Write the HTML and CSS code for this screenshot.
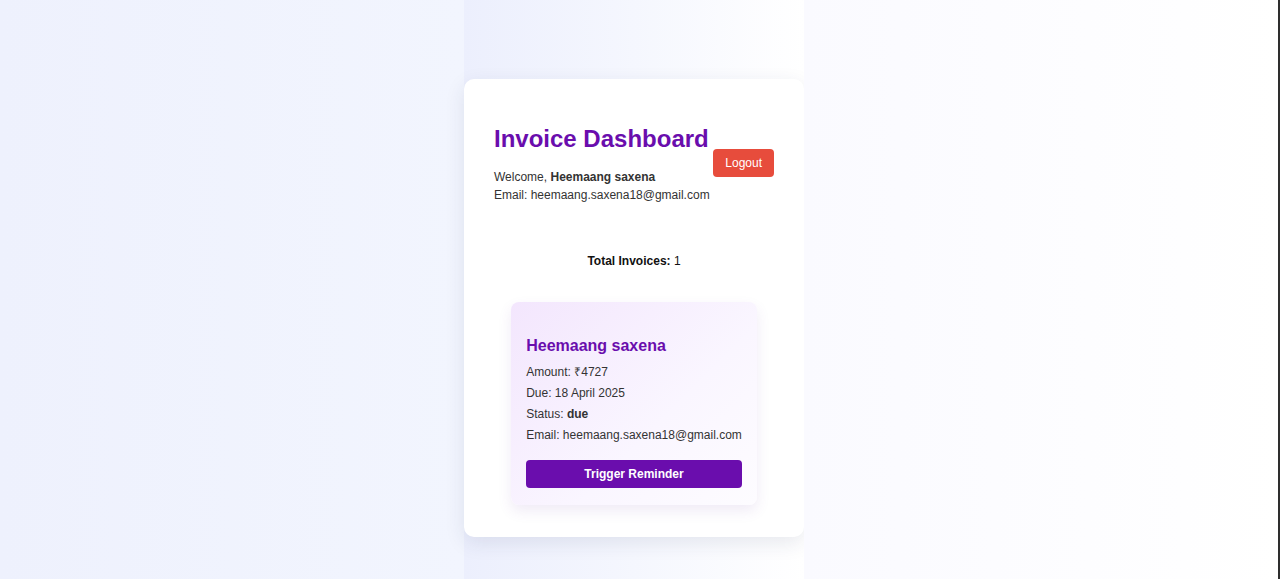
FILE: index.html
```html
<!DOCTYPE html>
<html lang="en">
<head>
<meta charset="utf-8">
<title>Invoice Dashboard</title>
<link rel="stylesheet" href="styles.css">
</head>
<body>
<div class="page">
  <div class="side side-left"></div>
  <div class="column">
    <div class="dashboard">
      <div class="header">
        <div class="user">
          <h1 class="title">Invoice Dashboard</h1>
          <p class="line">Welcome, <strong>Heemaang saxena</strong></p>
          <p class="line last">Email: heemaang.saxena18@gmail.com</p>
        </div>
        <button class="logout">Logout</button>
      </div>
      <p class="total"><strong>Total Invoices:</strong> 1</p>
      <div class="invoices">
        <div class="invoice">
          <h3 class="inv-name">Heemaang saxena</h3>
          <p class="inv-line">Amount: ₹4727</p>
          <p class="inv-line">Due: 18 April 2025</p>
          <p class="inv-line">Status: <strong>due</strong></p>
          <p class="inv-line">Email: heemaang.saxena18@gmail.com</p>
          <button class="remind">Trigger Reminder</button>
        </div>
      </div>
    </div>
  </div>
  <div class="side side-right"></div>
</div>
</body>
</html>
```
FILE: styles.css
```css
* { box-sizing: border-box; }
html, body { margin: 0; padding: 0; height: 100%; }
body {
  font-family: "Liberation Sans", Arial, sans-serif;
  color: #333;
  background: #ffffff;
}
.page {
  display: grid;
  grid-template-columns: 464px 340px 1fr;
  min-height: 579px;
  border-right: 2px solid #2e2e2e;
}
.side-left {
  background: linear-gradient(90deg, #eef1fd 0%, #f2f5fe 100%);
}
.side-right {
  background: linear-gradient(90deg, #fafaff 0%, #ffffff 100%);
}
.column {
  background: linear-gradient(90deg, #eceffd 0%, #f5f7fe 50%, #ffffff 100%);
  padding-top: 79px;
}
.dashboard {
  background: #ffffff;
  border-radius: 10px;
  box-shadow: 0 6px 20px rgba(40, 50, 90, 0.10);
  padding: 30px 30px 32px;
}
.header {
  display: flex;
  justify-content: space-between;
  align-items: center;
}
.user { white-space: nowrap; }
.title {
  margin: 16px 0 15px;
  font-size: 24px;
  line-height: 28px;
  font-weight: 700;
  color: #6a0dad;
}
.line {
  margin: 0;
  font-size: 12px;
  line-height: 18px;
  color: #333;
}
.line.last { margin-bottom: 13px; }
.logout {
  flex: none;
  height: 28px;
  padding: 0 12px;
  border: none;
  border-radius: 4px;
  background: #e74c3c;
  color: #ffffff;
  font-family: inherit;
  font-size: 12px;
}
.total {
  margin: 35px 0 32px;
  text-align: center;
  font-size: 12px;
  line-height: 18px;
  color: #111;
}
.invoices {
  display: flex;
  justify-content: center;
}
.invoice {
  width: fit-content;
  padding: 15px 15px 17px;
  border-radius: 8px;
  background: linear-gradient(135deg, #f3e6fd 0%, #faf6ff 60%, #fdfcff 100%);
  box-shadow: 0 6px 14px rgba(110, 60, 170, 0.10);
  white-space: nowrap;
}
.inv-name {
  margin: 20px 0 7px;
  font-size: 16px;
  line-height: 18px;
  font-weight: 700;
  color: #6a0dad;
}
.inv-line {
  margin: 0;
  font-size: 12px;
  line-height: 21px;
  color: #333;
}
.remind {
  display: block;
  width: 100%;
  height: 28px;
  margin-top: 14px;
  border: none;
  border-radius: 4px;
  background: #6a0dad;
  color: #ffffff;
  font-family: inherit;
  font-size: 12px;
  font-weight: 700;
}
```
